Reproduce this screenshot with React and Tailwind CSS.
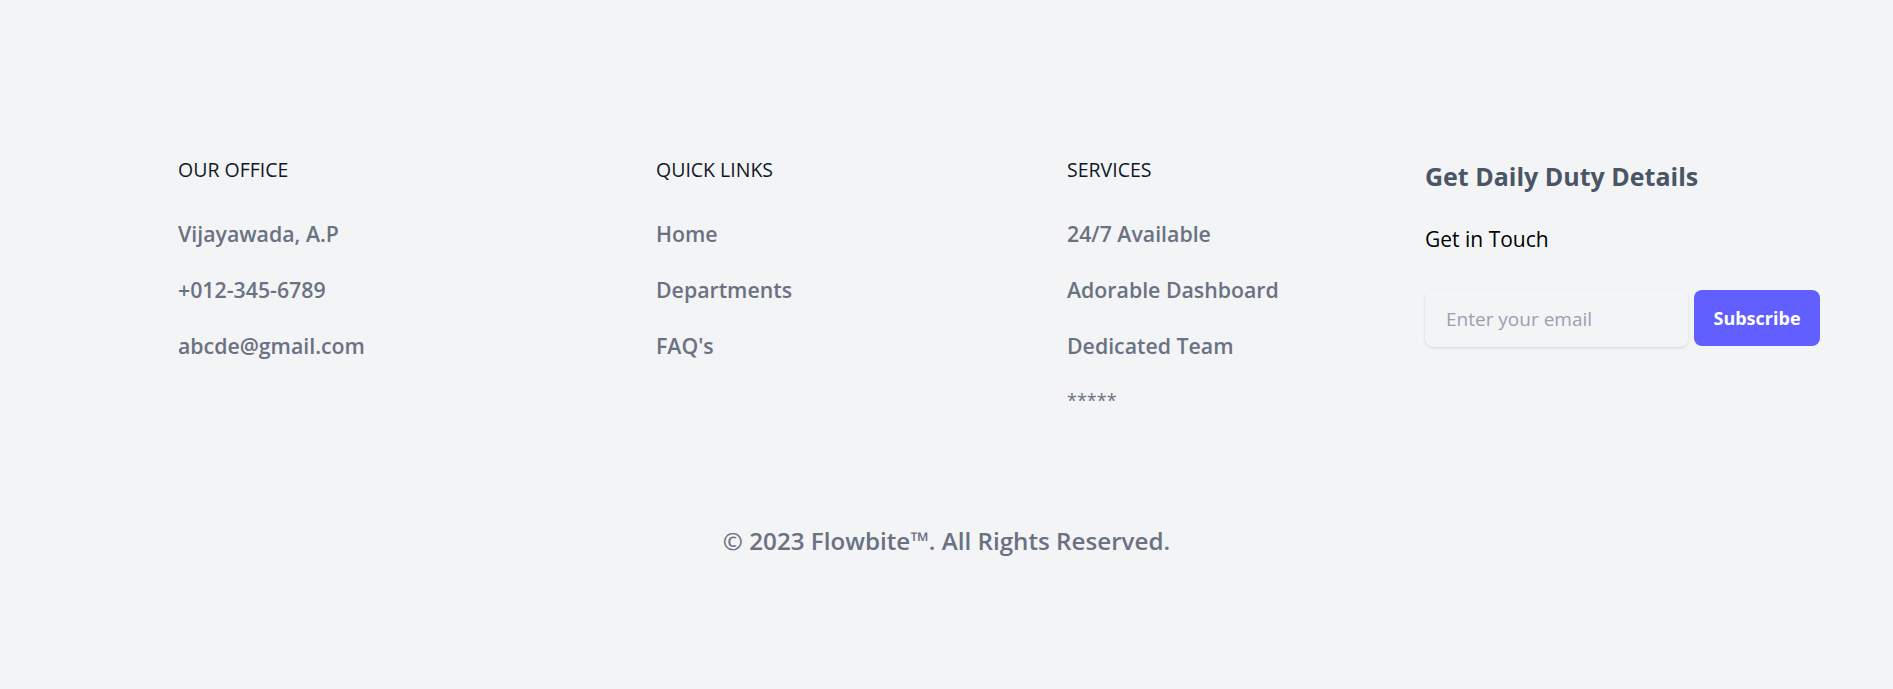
import React from 'react';

const columns = [
  { title: 'Our Office', width: 'w-[478px]', items: ['Vijayawada, A.P', '+012-345-6789', 'abcde@gmail.com'] },
  { title: 'Quick Links', width: 'w-[411px]', items: ['Home', 'Departments', "FAQ's"] },
  { title: 'Services', width: 'w-[358px]', items: ['24/7 Available', 'Adorable Dashboard', 'Dedicated Team'], extra: '*****' },
];

export default function App() {
  return (
    <footer className="min-h-screen bg-gray-100 pt-[156px] font-['Open_Sans',sans-serif]">
      <div className="flex pl-[178px]">
        {columns.map((col) => (
          <div key={col.title} className={col.width}>
            <h2 className="text-[19.5px] leading-[28px] uppercase text-gray-900">{col.title}</h2>
            <ul className="mt-[34px] space-y-[24px]">
              {col.items.map((item) => (
                <li key={item}>
                  <a href="#" className="text-[21.3px] leading-[32px] font-semibold text-gray-500 hover:underline">{item}</a>
                </li>
              ))}
              {col.extra && (
                <li className="!mt-[20px] text-[18px] leading-[28px] text-gray-500">{col.extra}</li>
              )}
            </ul>
          </div>
        ))}

        <div className="flex-1 pt-[2px]">
          <h2 className="text-[25px] leading-[36px] font-bold text-gray-600">Get Daily Duty Details</h2>
          <p className="mt-[29px] text-[21px] leading-[32px] text-black">Get in Touch</p>
          <form className="mt-[35px] flex gap-[6px]" onSubmit={(e) => e.preventDefault()}>
            <input
              type="email"
              placeholder="Enter your email"
              className="h-[57px] w-[263px] rounded-lg bg-gray-100 px-[21px] text-[19px] text-gray-700 shadow-sm outline-none placeholder:text-gray-400"
            />
            <button type="submit" className="h-[56px] w-[126px] rounded-lg bg-indigo-500 text-[18px] font-bold text-white">
              Subscribe
            </button>
          </form>
        </div>
      </div>

      <p className="mt-[111px] text-center text-[24.2px] leading-[32px] font-semibold text-gray-500">
        © 2023 Flowbite™. All Rights Reserved.
      </p>
    </footer>
  );
}
